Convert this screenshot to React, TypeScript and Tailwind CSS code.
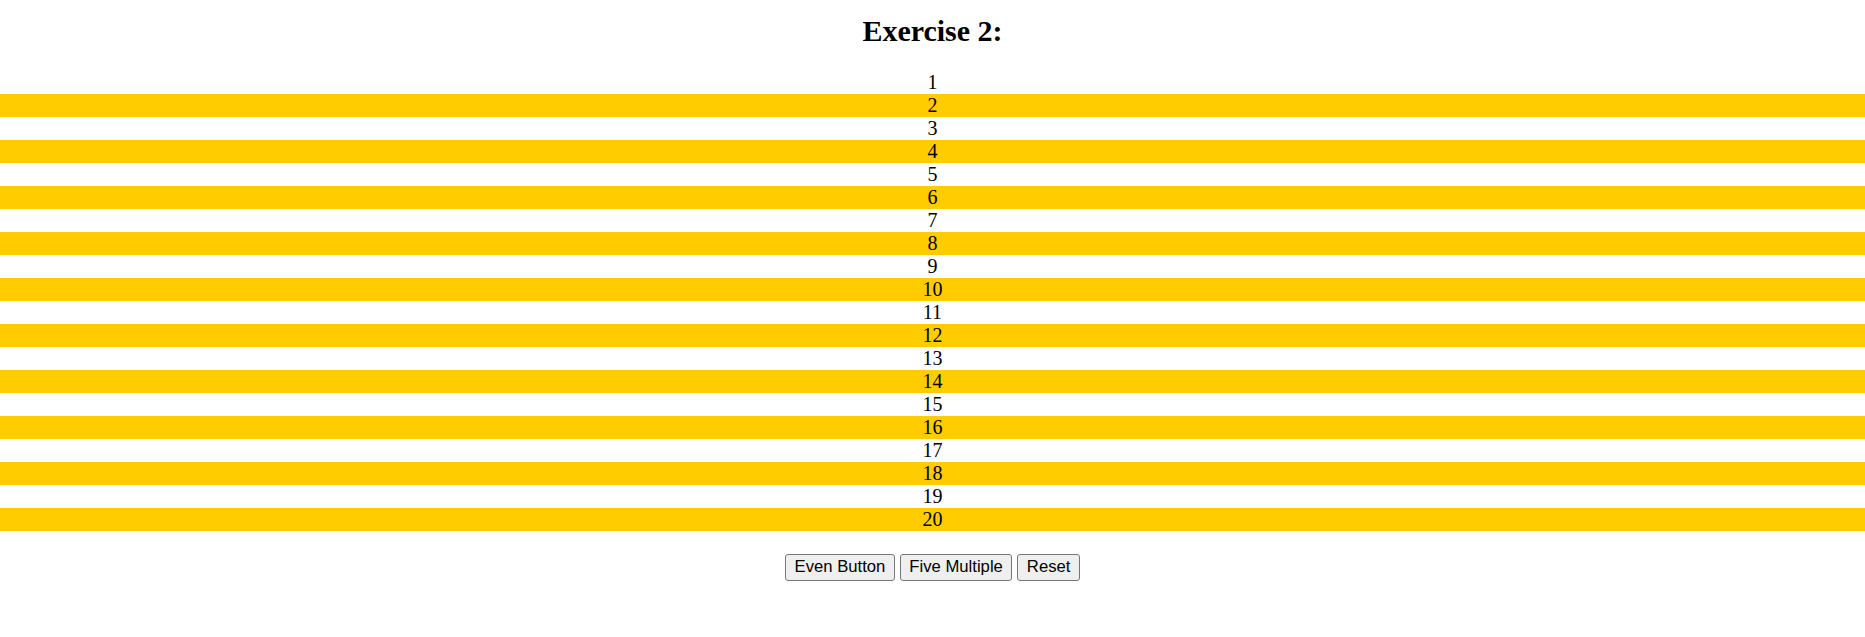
import React from "react";

export default function App() {
  const nums = Array.from({ length: 20 }, (_, i) => i + 1);
  const btn =
    "h-[27px] rounded-[3px] border border-[#767676] bg-[#efefef] px-[8.5px] text-[16.67px] leading-none text-black";
  return (
    <div className="w-full bg-white text-black" style={{ fontFamily: '"Liberation Serif", "Times New Roman", serif' }}>
      <h2 className="pt-[14px] mb-[23px] text-center text-[30px] font-bold leading-[34px]">Exercise 2:</h2>
      <div className="flex flex-col">
        {nums.map((n) => (
          <div
            key={n}
            className={`h-[23px] text-center text-[20px] leading-[23px] ${n % 2 === 0 ? "bg-[#ffcc00]" : "bg-white"}`}
          >
            {n}
          </div>
        ))}
      </div>
      <div className="mt-[23px] flex justify-center gap-[5px]" style={{ fontFamily: '"Liberation Sans", Arial, sans-serif' }}>
        <button className={btn}>Even Button</button>
        <button className={btn}>Five Multiple</button>
        <button className={btn}>Reset</button>
      </div>
    </div>
  );
}
